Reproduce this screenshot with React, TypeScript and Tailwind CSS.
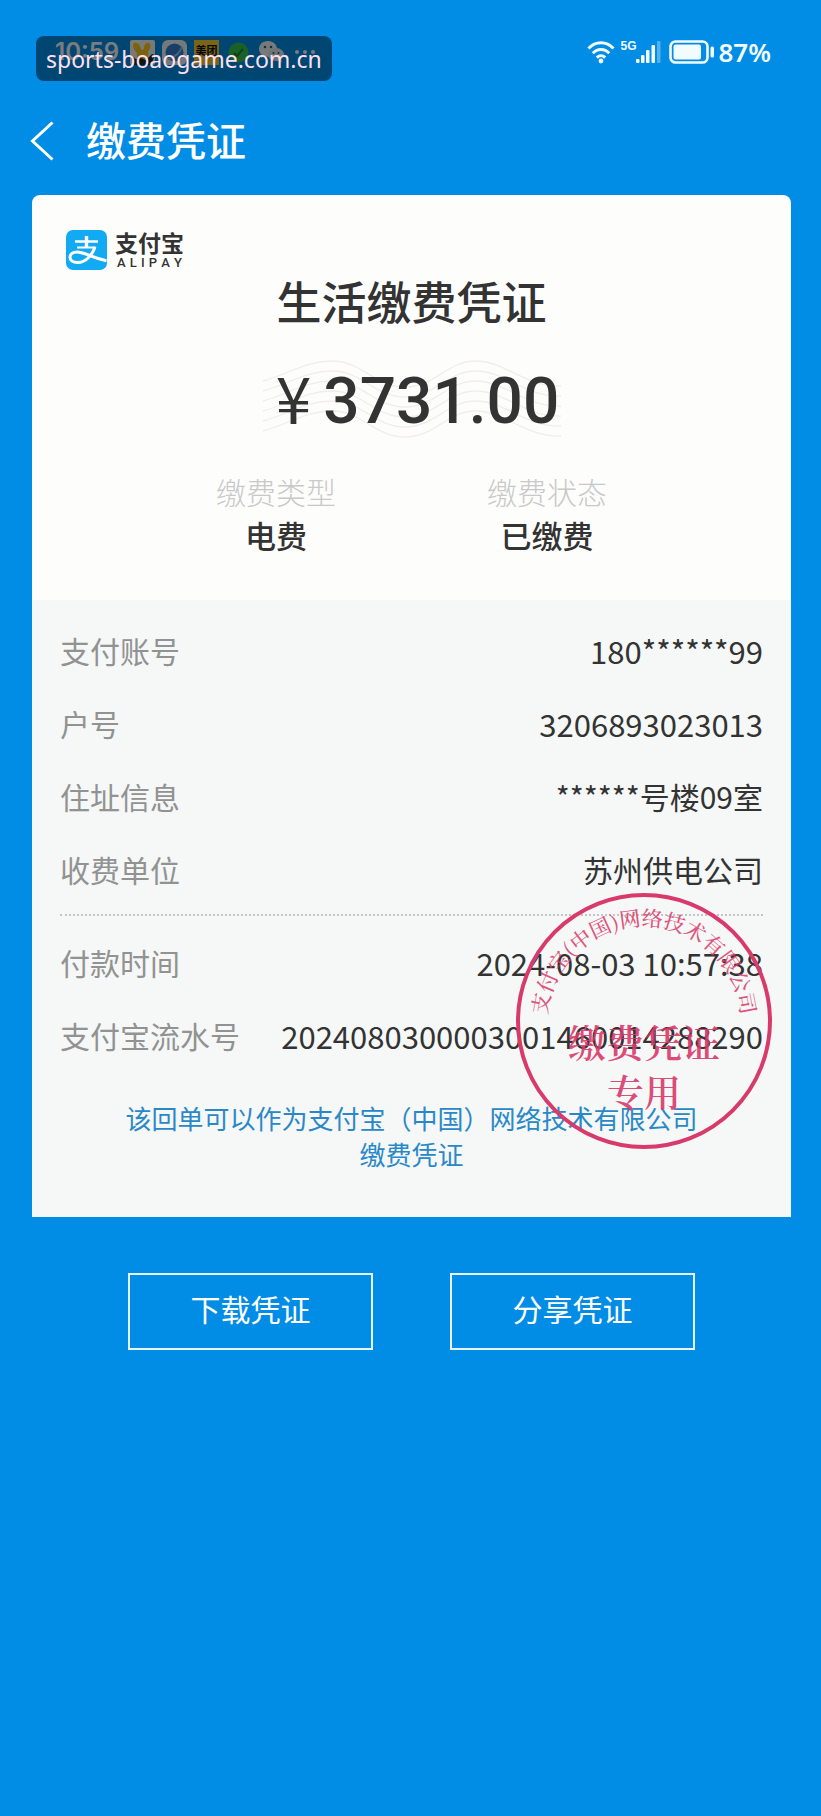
import type { ReactNode } from "react";

const SANS = "font-['Noto_Sans_CJK_SC',sans-serif]";

function StatusBar() {
  return (
    <div className="flex h-10 items-center justify-between pr-[50px] pl-[55px] text-[#f2fbff]">
      <div className="flex items-center gap-[7px]">
        <span className="font-[Inter,sans-serif] text-2xl font-semibold">10:59</span>
        <svg className="ml-1" width="25" height="25" viewBox="0 0 25 25" aria-hidden="true">
          <rect width="25" height="25" rx="2" fill="#f3f3ee" />
          <path d="M4 3c3-1 6 1 7 6l1.500 1L14 9c0-5 2-7 5-6 2 1 2 5-1 9 1 4-1 8-5.500 8S6 17 7 13C3 9 2 5 4 3z" fill="#f5c51c" />
          <path d="M0 15l6 4 5-1 5 2 6-6 3 1-4 10H4z" fill="#1c2a30" />
        </svg>
        <svg width="25" height="25" viewBox="0 0 25 25" aria-hidden="true">
          <rect width="25" height="25" rx="6" fill="#e8f2f8" />
          <circle cx="12.500" cy="12.500" r="9" fill="#2f7fd0" />
          <path d="M6 19c6-1 12-6 14-12" fill="none" stroke="#8fc4ee" strokeWidth="2" />
        </svg>
        <span className={`flex h-[25px] w-[25px] items-center justify-center bg-[#f2c832] pb-1 text-[11px] font-bold text-[#111] ${SANS}`}>
          美团
        </span>
        <svg className="ml-[2px]" width="21" height="21" viewBox="0 0 21 21" aria-hidden="true">
          <circle cx="10.500" cy="10.500" r="10" fill="#35c24a" />
          <path d="M6 11l3 3 6-7" fill="none" stroke="#13823a" strokeWidth="2" />
        </svg>
        <svg className="ml-[2px]" width="26" height="24" viewBox="0 0 26 24" aria-hidden="true">
          <path d="M10 1C4.500 1 1 4.600 1 9c0 2.500 1.200 4.500 3 6l-1 3 3.600-1.800c1 .3 2.200.5 3.400.5 5.500 0 9-3.500 9-7.700S15.500 1 10 1z" fill="#eef4f4" />
          <path d="M18 8c-4.600 0-8 3-8 6.600s3.400 6.500 8 6.500c1 0 1.900-.1 2.700-.4L24 22.500l-.9-3c1.700-1.200 2.900-3 2.900-4.900C26 11 22.600 8 18 8z" fill="#dfe9e9" />
          <g fill="#3c5a68">
            <circle cx="7" cy="7" r="1.300" />
            <circle cx="13" cy="7" r="1.300" />
            <circle cx="15.500" cy="13" r="1.100" />
            <circle cx="20.500" cy="13" r="1.100" />
          </g>
        </svg>
        <svg className="ml-1" width="20" height="4" viewBox="0 0 20 4" fill="currentColor" aria-hidden="true">
          <circle cx="2" cy="2" r="2" />
          <circle cx="10" cy="2" r="2" />
          <circle cx="18" cy="2" r="2" />
        </svg>
      </div>

      <div className="flex items-center">
        <svg width="28" height="24" viewBox="0 0 28 24" fill="none" stroke="currentColor" strokeWidth="3" aria-label="Wi-Fi">
          <path d="M1.500 8.500C8.500 .8 19.500 .8 26.500 8.500" />
          <path d="M5.800 13.200c4.700-5 11.700-5 16.400 0" />
          <path d="M9.800 17.600c2.500-2.500 5.900-2.500 8.400 0" />
          <circle cx="14" cy="21" r="2.400" fill="currentColor" stroke="none" />
        </svg>
        <span className="ml-[5px] self-start font-['Liberation_Sans_Narrow','Liberation_Sans',sans-serif] text-xs leading-3 font-bold">5G</span>
        <svg className="-ml-px" width="25" height="24" viewBox="0 0 25 24" fill="currentColor" aria-label="信号">
          <rect x="0" y="19" width="3.500" height="4" rx="1" />
          <rect x="5" y="15" width="3.500" height="8" rx="1" />
          <rect x="10" y="10" width="3.500" height="13" rx="1" />
          <rect x="15.500" y="5" width="3.500" height="18" rx="1" />
          <rect x="21" y="1" width="3.500" height="22" rx="1" opacity="0.35" />
        </svg>
        <svg className="ml-2" width="46" height="24" viewBox="0 0 46 24" aria-label="电池">
          <rect x="1.500" y="1.500" width="37" height="21" rx="5" fill="none" stroke="currentColor" strokeWidth="2.600" />
          <rect x="4.500" y="4.500" width="27.500" height="15" rx="2" fill="currentColor" />
          <rect x="41.500" y="6.500" width="3.500" height="11" rx="1.500" fill="currentColor" />
        </svg>
        <span className="ml-1 font-['Noto_Sans',sans-serif] text-[26px] leading-6 font-semibold">87%</span>
      </div>
    </div>
  );
}

function AlipayLogo() {
  return (
    <div className="flex items-center gap-2 text-[#333]">
      <svg width="41" height="40" viewBox="0 0 41 40" aria-hidden="true">
        <rect width="41" height="40" rx="7" fill="#12aaf2" />
        <g fill="none" stroke="#fff" strokeLinecap="butt">
          <path d="M9 11.500h23" strokeWidth="2.400" />
          <path d="M20.500 6v11" strokeWidth="3.400" />
          <path d="M11 17.500h18.500" strokeWidth="2.200" />
          <path d="M29 17c-2 6.500-8.500 15.500-17.500 15.500-5 0-7.500-2.500-7.500-5.200 0-3 2.800-5.300 7-5.300 7 0 14 5.200 29.500 8.800" strokeWidth="3" />
        </g>
      </svg>
      <div>
        <div className="text-[23px] leading-[22px] font-bold">支付宝</div>
        <div className="mt-[3px] flex justify-between px-[2px] font-[Roboto,sans-serif] text-[13px] leading-[13px] font-medium">
          {"ALIPAY".split("").map((letter, i) => (
            <span key={i}>{letter}</span>
          ))}
        </div>
      </div>
    </div>
  );
}

function Waves() {
  const lines = [0, 1, 2, 3, 4, 5];
  return (
    <svg className="absolute inset-x-0 top-0 mx-auto" width="298" height="84" viewBox="0 0 298 84" fill="none" stroke="#f1edeb" strokeWidth="1.300" aria-hidden="true">
      {lines.map((i) => {
        const high = 3 + i * 10;
        const low = 29 + i * 10;
        const mid = (high + low) / 2;
        return (
          <path
            key={i}
            d={`M0 ${mid + 7}C26 ${mid} 42 ${high} 70 ${high}S112 ${low} 142 ${low}S184 ${high} 213 ${high}S262 ${low} 298 ${low - 1}`}
          />
        );
      })}
    </svg>
  );
}

function Row({ label, children, numeric = false }: { label: string; children: ReactNode; numeric?: boolean }) {
  return (
    <div className="flex h-[73px] items-center justify-between">
      <dt className="pb-1 text-3xl text-[#929292]">{label}</dt>
      <dd className={numeric ? "pb-px text-[31px] text-[#333]" : "pb-1 text-3xl text-[#333]"}>{children}</dd>
    </div>
  );
}

function Seal() {
  return (
    <svg
      className="pointer-events-none absolute right-[17px] bottom-[66px] font-['Noto_Serif_CJK_SC','Noto_Sans_CJK_SC',sans-serif]"
      width="260"
      height="260"
      viewBox="0 0 260 260"
      fill="#d93a6c"
      textAnchor="middle"
      aria-label="缴费凭证专用章"
    >
      <circle cx="130" cy="130" r="126" fill="none" stroke="#d93a6c" strokeWidth="4" />
      <defs>
        <path id="seal-text-arc" d="M33 142V132A97 97 0 0 1 227 132V142" />
      </defs>
      <text fontSize="21" fontWeight="500" opacity="0.850">
        <textPath href="#seal-text-arc" startOffset="50%">
          支付宝(中国)网络技术有限公司
        </textPath>
      </text>
      <text x="130" y="166" fontSize="38" fontWeight="600" opacity="0.900">
        缴费凭证
      </text>
      <text x="130" y="216" fontSize="37" fontWeight="600" opacity="0.900">
        专用
      </text>
    </svg>
  );
}

export default function App() {
  return (
    <div className={`relative min-h-screen bg-[#018ce6] pt-8 ${SANS}`}>
      <StatusBar />
      <div className="absolute top-9 left-9 flex h-[45px] items-center rounded-lg bg-black/50 px-[10px] pt-[2px] font-['Noto_Sans',sans-serif] text-[23px] text-[#ffe0f0]">
        sports-boaogame.com.cn
      </div>

      <header className="mt-[39px] flex h-[60px] items-center pl-[30px] text-white">
        <button type="button" aria-label="返回">
          <svg width="24" height="40" viewBox="0 0 24 40" fill="none" stroke="currentColor" strokeWidth="3">
            <path d="M22.500 1.500L2.500 20l20 18.500" />
          </svg>
        </button>
        <h1 className="ml-8 pb-1 text-[40px] leading-[56px] font-medium">缴费凭证</h1>
      </header>

      <main className="relative mt-6 mr-[30px] ml-8 overflow-hidden rounded-t-lg bg-[#fdfefc]">
        <section className="h-[405px] pt-[35px]">
          <div className="pl-[34px]">
            <AlipayLogo />
          </div>
          <h2 className="mt-px text-center text-[45px] leading-[60px] font-medium text-[#333]">生活缴费凭证</h2>
          <div className="relative mt-[27px] h-[84px]">
            <Waves />
            <p className="relative flex items-center justify-center gap-3 pt-[2px] pl-3 leading-[72px] text-[#333]">
              <span className="pb-3 text-[64px]">¥</span>
              <span className="font-[Roboto,sans-serif] text-[64px] font-medium">3731.00</span>
            </p>
          </div>
          <dl className="mx-auto mt-[27px] grid max-w-[542px] grid-cols-2 text-center">
            <div>
              <dt className="text-3xl leading-[44px] font-light text-[#c9c9c9]">缴费类型</dt>
              <dd className="text-[31px] leading-[44px] font-medium text-[#333]">电费</dd>
            </div>
            <div>
              <dt className="text-3xl leading-[44px] font-light text-[#c9c9c9]">缴费状态</dt>
              <dd className="text-[31px] leading-[44px] font-medium text-[#333]">已缴费</dd>
            </div>
          </dl>
        </section>

        <section className="bg-[#f5f8f6] px-7 pt-[15px] pb-[45px]">
          <dl>
            <Row label="支付账号" numeric>180******99</Row>
            <Row label="户号" numeric>3206893023013</Row>
            <Row label="住址信息">******号楼09室</Row>
            <Row label="收费单位">苏州供电公司</Row>
          </dl>
          <hr className="mt-[7px] mb-[11px] border-t-2 border-dotted border-[#c4c4c4]" />
          <dl>
            <Row label="付款时间" numeric>2024-08-03 10:57:38</Row>
            <Row label="支付宝流水号" numeric>2024080300003001460014288290</Row>
          </dl>
          <p className="mt-[27px] text-center text-[26px] leading-9 text-[#2b88c8]">
            该回单可以作为支付宝（中国）网络技术有限公司
            <br />
            缴费凭证
          </p>
        </section>
        <Seal />
      </main>

      <div className="flex justify-center gap-[77px] pt-14 pb-16 pl-[2px]">
        <button type="button" className="h-[77px] w-[245px] border-2 border-white/90 pb-2 text-3xl text-white">
          下载凭证
        </button>
        <button type="button" className="h-[77px] w-[245px] border-2 border-white/90 pb-2 text-3xl text-white">
          分享凭证
        </button>
      </div>
    </div>
  );
}
